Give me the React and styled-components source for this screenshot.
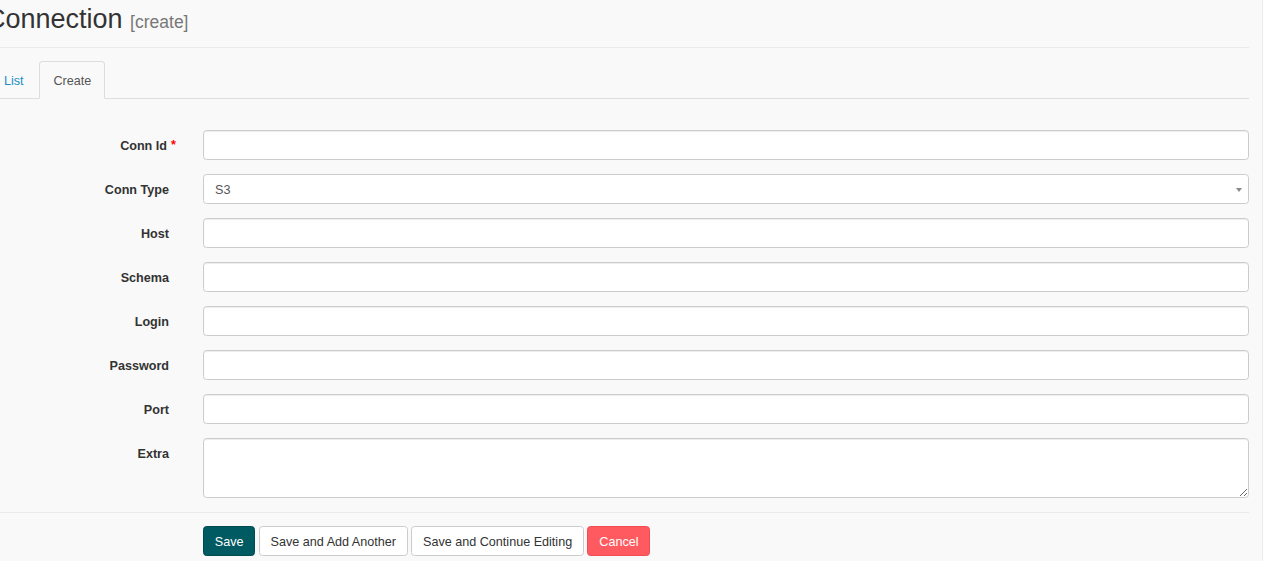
import React from "react";
import styled, { createGlobalStyle } from "styled-components";

const Global = createGlobalStyle`
  html, body { margin: 0; padding: 0; background: #f9f9f9; }
  body {
    font-family: "Liberation Sans", Arial, Helvetica, sans-serif;
    font-size: 12.6px;
    line-height: 18px;
    color: #333;
    overflow: hidden;
  }
  * { box-sizing: border-box; }
`;

const Frame = styled.div`
  width: 1263px;
  height: 561px;
  border-right: 1px solid #ececec;
  overflow: hidden;
`;

const Page = styled.div`
  margin-left: -10px;
  width: 1259px;
`;

const Header = styled.div`
  padding: 5px 0 12px;
  border-bottom: 1px solid #eaeaea;
  margin-left: 10px;
`;

const Title = styled.h2`
  margin: 0 0 0 -14px;
  font-size: 27px;
  line-height: 29.7px;
  height: 29.7px;
  font-weight: 400;
  color: #333;
  white-space: nowrap;
`;

const Small = styled.small`
  font-size: 17.5px;
  line-height: 0;
  color: #777;
  font-weight: 400;
`;

const Tabs = styled.ul`
  list-style: none;
  margin: 13px 0 0;
  padding: 0;
  display: flex;
  border-bottom: 1px solid #ddd;
`;

const Tab = styled.li`
  margin-bottom: -1px;
  margin-right: 1.8px;
`;

const TabLink = styled.a`
  display: block;
  padding: 10.4px 13px 7.6px;
  line-height: 18px;
  font-size: 12.6px;
  border: 1px solid ${(p) => (p.$active ? "#ddd" : "transparent")};
  border-bottom-color: ${(p) => (p.$active ? "#f9f9f9" : "transparent")};
  border-radius: 3.6px 3.6px 0 0;
  background: ${(p) => (p.$active ? "#f9f9f9" : "transparent")};
  color: ${(p) => (p.$active ? "#555" : "#1a8fc6")};
  text-decoration: none;
  cursor: pointer;
`;

const Form = styled.form`
  padding-top: 31px;
`;

const Row = styled.div`
  display: grid;
  grid-template-columns: 179px 1046px;
  column-gap: 34px;
  margin-bottom: 14px;
`;

const Label = styled.label`
  position: relative;
  justify-self: end;
  padding-top: 7px;
  font-weight: 700;
  font-size: 12.6px;
  line-height: 18px;
  color: #333;
  white-space: nowrap;
`;

const LabelText = styled.span`
  margin-right: ${(p) => (p.$required ? "2px" : "0")};
`;

const Required = styled.strong`
  position: absolute;
  left: calc(100% + 2px);
  top: 6.5px;
  color: #f00;
  font-weight: 700;
`;

const Input = styled.input`
  display: block;
  width: 100%;
  height: 30px;
  padding: 5px 10.8px;
  font-family: inherit;
  font-size: 12.6px;
  color: #555;
  background: #fff;
  border: 1px solid #ccc;
  border-radius: 3.6px;
  outline: none;
  box-shadow: inset 0 1px 1px rgba(0, 0, 0, 0.075);
`;

const SelectBox = styled.div`
  position: relative;
  height: 30px;
  padding: 2px 11px 0;
  display: flex;
  align-items: center;
  font-size: 12.6px;
  color: #555;
  background: #fff;
  border: 1px solid #ccc;
  border-radius: 3.6px;
`;

const Caret = styled.span`
  position: absolute;
  right: 6px;
  top: 13px;
  width: 0;
  height: 0;
  border-left: 3px solid transparent;
  border-right: 3px solid transparent;
  border-top: 4px solid #888;
`;

const TextArea = styled.textarea`
  display: block;
  width: 100%;
  height: 60px;
  padding: 5px 10.8px;
  font-family: inherit;
  font-size: 12.6px;
  color: #555;
  background: #fff;
  border: 1px solid #ccc;
  border-radius: 3.6px;
  outline: none;
  resize: vertical;
  box-shadow: inset 0 1px 1px rgba(0, 0, 0, 0.075);
`;

const Divider = styled.div`
  margin-left: 10px;
  border-top: 1px solid #eaeaea;
`;

const Actions = styled.div`
  display: flex;
  gap: 3.5px;
  padding: 13px 0 0 213px;
`;

const variants = {
  primary: { bg: "#005a61", border: "#004a50", color: "#fff" },
  default: { bg: "#fff", border: "#ccc", color: "#333" },
  danger: { bg: "#ff5a5f", border: "#f24c52", color: "#fff" },
};

const Button = styled.button`
  height: 30.6px;
  padding: 6.2px 10.8px 4.6px;
  font-family: inherit;
  font-size: 12.6px;
  line-height: 18px;
  border-radius: 3.6px;
  border: 1px solid ${(p) => variants[p.$variant].border};
  background: ${(p) => variants[p.$variant].bg};
  color: ${(p) => variants[p.$variant].color};
  cursor: pointer;
  white-space: nowrap;
`;

const fields = ["Host", "Schema", "Login", "Password", "Port"];

export default function App() {
  return (
    <Frame>
      <Global />
      <Page>
        <Header>
          <Title>
            Connection <Small>[create]</Small>
          </Title>
        </Header>
        <Tabs>
          <Tab>
            <TabLink>List</TabLink>
          </Tab>
          <Tab>
            <TabLink $active>Create</TabLink>
          </Tab>
        </Tabs>
        <Form onSubmit={(e) => e.preventDefault()}>
          <Row>
            <Label>
              <LabelText $required>Conn Id</LabelText>
              <Required>*</Required>
            </Label>
            <Input type="text" />
          </Row>
          <Row>
            <Label>Conn Type</Label>
            <SelectBox>
              S3
              <Caret />
            </SelectBox>
          </Row>
          {fields.map((f) => (
            <Row key={f}>
              <Label>{f}</Label>
              <Input type={f === "Password" ? "password" : "text"} />
            </Row>
          ))}
          <Row>
            <Label>Extra</Label>
            <TextArea />
          </Row>
          <Divider />
          <Actions>
            <Button $variant="primary">Save</Button>
            <Button $variant="default">Save and Add Another</Button>
            <Button $variant="default">Save and Continue Editing</Button>
            <Button $variant="danger">Cancel</Button>
          </Actions>
        </Form>
      </Page>
    </Frame>
  );
}
